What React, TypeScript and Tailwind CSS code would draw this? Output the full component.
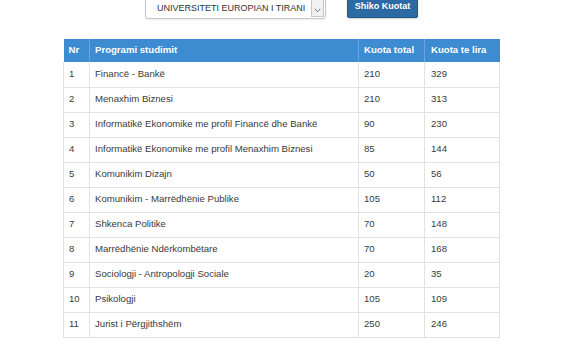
import React from "react";

const rows: [number, string, number, number][] = [
  [1, "Financë - Bankë", 210, 329],
  [2, "Menaxhim Biznesi", 210, 313],
  [3, "Informatikë Ekonomike me profil Financë dhe Bankë", 90, 230],
  [4, "Informatikë Ekonomike me profil Menaxhim Biznesi", 85, 144],
  [5, "Komunikim Dizajn", 50, 56],
  [6, "Komunikim - Marrëdhënie Publike", 105, 112],
  [7, "Shkenca Politike", 70, 148],
  [8, "Marrëdhënie Ndërkombëtare", 70, 168],
  [9, "Sociologji - Antropologji Sociale", 20, 35],
  [10, "Psikologji", 105, 109],
  [11, "Jurist i Përgjithshëm", 250, 246],
];

export default function App() {
  return (
    <div
      className="w-[561px] h-[359px] bg-white overflow-hidden text-[#333]"
      style={{ fontFamily: '"Liberation Sans", Arial, sans-serif' }}
    >
      <div className="flex items-start pl-[145px]">
        <div className="-mt-[4px] h-[23px] w-[181px] flex border border-[#c8c8c8] rounded-[3px] bg-white shadow-[0_1px_2px_rgba(0,0,0,0.08)]">
          <div className="flex-1 flex items-end pb-[3px] pl-[11px] text-[9px] text-[#333] tracking-[0px]">
            UNIVERSITETI EUROPIAN I TIRANI
          </div>
          <div className="w-[13px] mt-[2px] mb-[1px] mr-[1px] border border-[#c6c6c6] bg-[#f1f1f1] flex items-end justify-center pb-[3px]">
            <svg width="7" height="5" viewBox="0 0 7 5">
              <path d="M0.8 0.8 L3.5 3.8 L6.2 0.8" fill="none" stroke="#777" strokeWidth="1" />
            </svg>
          </div>
        </div>
        <div className="ml-[21px] -mt-[3px] h-[21px] w-[71px] flex items-end justify-center pb-[4px] rounded-[2px] bg-[#2c6aa3] border border-[#22588a] text-white font-bold text-[9px] shadow-[0_1px_2px_rgba(0,0,0,0.2)]">
          Shiko Kuotat
        </div>
      </div>

      <div className="ml-[63px] mt-[20px] w-[436px]">
        <table className="w-[436px] border-collapse table-fixed text-[9.6px]">
          <colgroup>
            <col className="w-[26px]" />
            <col className="w-[269px]" />
            <col className="w-[66px]" />
            <col className="w-[75px]" />
          </colgroup>
          <thead>
            <tr className="h-[23px] bg-[#3d8bd0] text-white font-bold text-left">
              <th className="px-[5px] border-r border-[#6aa6db] font-bold">Nr</th>
              <th className="px-[5px] border-r border-[#6aa6db] font-bold">Programi studimit</th>
              <th className="px-[5px] border-r border-[#6aa6db] font-bold">Kuota total</th>
              <th className="px-[6px] font-bold">Kuota te lira</th>
            </tr>
          </thead>
          <tbody>
            {rows.map((r) => (
              <tr key={r[0]} className="h-[25px] border-b border-[#e2e2e2] text-[#3a3a3a]">
                <td className="px-[5px] border-l border-r border-[#e2e2e2]">{r[0]}</td>
                <td className="px-[5px] border-r border-[#e2e2e2]">{r[1]}</td>
                <td className="px-[5px] border-r border-[#e2e2e2]">{r[2]}</td>
                <td className="px-[6px] border-r border-[#e2e2e2]">{r[3]}</td>
              </tr>
            ))}
          </tbody>
        </table>
      </div>
    </div>
  );
}
